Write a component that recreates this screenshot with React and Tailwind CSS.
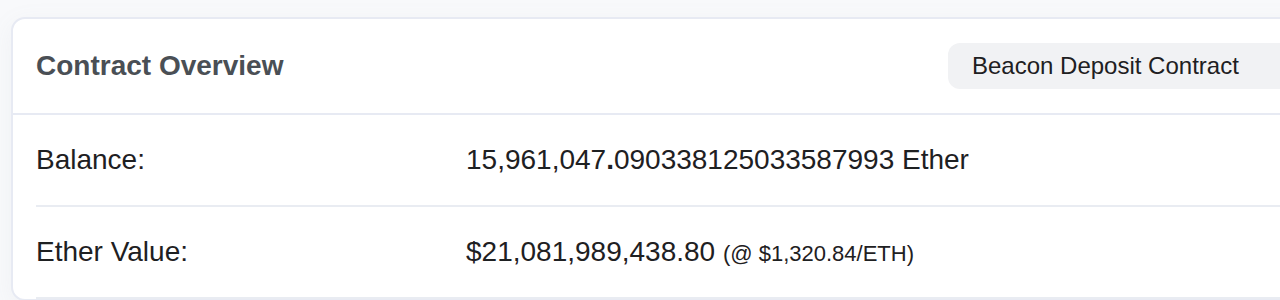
export default function App() {
  const rows = [
    {
      label: 'Balance:',
      value: (
        <>
          15,961,047<b>.</b>090338125033587993 Ether
        </>
      ),
    },
    {
      label: 'Ether Value:',
      value: (
        <>
          $21,081,989,438.80 <span className="text-[22px]">(@ $1,320.84/ETH)</span>
        </>
      ),
    },
  ]

  return (
    <div className="w-[1280px] h-[300px] overflow-hidden bg-[#f8f9fb] pt-[17px] pl-[11px] font-['Liberation_Sans',Arial,sans-serif]">
      <div className="w-[1340px] bg-white rounded-[14px] border-2 border-[#e7eaf3] shadow-[0_6px_24px_rgba(140,152,164,0.08)]">
        <div className="flex items-center justify-between h-[96px] pl-[23px] border-b-2 border-[#e7eaf3]">
          <h2 className="text-[28px] font-bold text-[#4a4f55]">Contract Overview</h2>
          <div className="w-[403px] mr-[-2px] h-[46px] flex items-center pl-[24px] bg-[#f1f2f4] rounded-[12px] text-[24px] text-[#1e2022]">
            Beacon Deposit Contract
          </div>
        </div>
        <div className="pl-[23px]">
          {rows.map(r => (
            <div key={r.label} className="flex items-center h-[92px] border-b-2 border-[#e9ecf2] text-[28px] text-[#1e2022]">
              <div className="w-[430px] shrink-0">{r.label}</div>
              <div>{r.value}</div>
            </div>
          ))}
        </div>
      </div>
    </div>
  )
}
